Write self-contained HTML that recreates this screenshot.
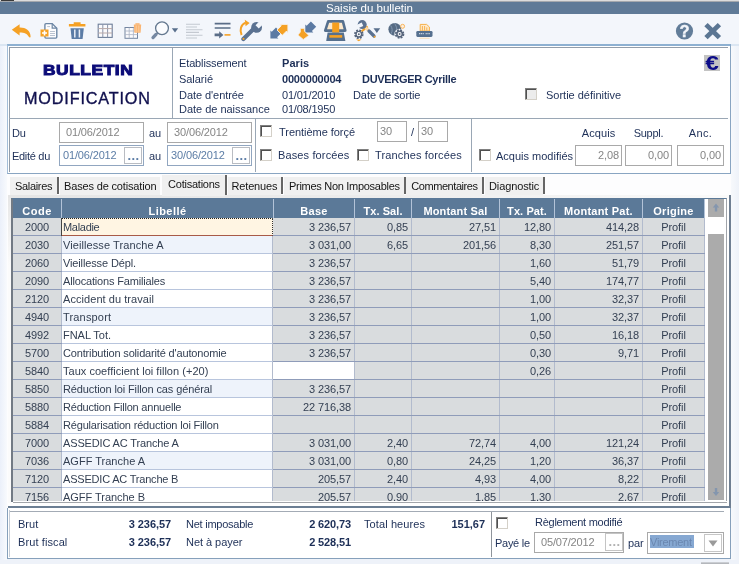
<!DOCTYPE html>
<html lang="fr"><head><meta charset="utf-8"><title>Saisie du bulletin</title>
<style>
*{box-sizing:border-box;margin:0;padding:0}
html,body{width:739px;height:564px;overflow:hidden}
body{position:relative;background:#eef2f9;font-family:"Liberation Sans",Arial,sans-serif;font-size:11px;color:#1d2f57;letter-spacing:-.1px}
.a{position:absolute;white-space:nowrap}
.t{position:absolute;white-space:nowrap;line-height:14px;height:14px}
.b{font-weight:bold}
#title{left:0;top:0;width:739px;height:14px;background:#5f7a97;border-top:1px solid #dcdcdc;box-shadow:inset 0 1px 0 #a4a8ad}
#title span{position:absolute;left:0;width:739px;text-align:center;top:0;line-height:15px;color:#fff;font-size:11.5px;letter-spacing:0}
#tb{left:0;top:14px;width:739px;height:30px;background:#f3f6fb}
#main{left:8px;top:46px;width:722px;height:127px;background:#fff;border:1px solid #7f9db9;border-top:2px solid #7f9db9}
.hl{position:absolute;height:1px;background:#9aa7b5}
.vl{position:absolute;width:1px;background:#9aa7b5}
.in{position:absolute;background:#fff;border:1px solid #a9a9a9;color:#858585;line-height:19px;height:21px;padding:0 0 0 6px;white-space:nowrap;font-size:11px}
.in.bl{border-color:#91a6c0;color:#5c7da6}
.in.r{text-align:right;padding:0 2px 0 0}
.dots{position:absolute;width:18px;height:17px;border:1px solid #b9bcc2;background:#fff;color:#5c7da6;font-weight:bold;text-align:center;line-height:15px;font-size:13px;letter-spacing:.4px;padding-left:1px}
.cb{position:absolute;width:12px;height:12px;background:#fff;border:1px solid #d4d0c8;border-top-color:#808080;border-left-color:#808080;box-shadow:inset 1px 1px 0 #505050}
.cb.dis{background:#ececec}
.tab{position:absolute;top:177px;height:18px;line-height:19px;background:#f0f0f0;white-space:nowrap;color:#141414;font-size:11px}
.tab.act{top:175px;height:21px;line-height:18px;z-index:2}
#grid{left:11px;top:198px;width:718px;height:306px;background:#fff;border:1px solid #8a8a8a;border-bottom:none;overflow:hidden}
.th{border-right:1px solid #b3c3d8;position:absolute;top:199px;height:19px;background:#5b7998;color:#fff;font-weight:bold;font-size:11px;text-align:center;line-height:24px;white-space:nowrap;overflow:hidden}
.td{border-right:1px solid #b2bbcd;position:absolute;height:17px;line-height:19px;background:#d9dcde;color:#333f52;white-space:nowrap;overflow:hidden;font-size:11px}
.td.c{text-align:center}
.td.l{background:#fff;padding-left:1px;height:18px;border-bottom:1px solid #b8c5dd}
.td.lb{background:#eef3fb}
.td.r{text-align:right;padding-right:3px}
.td.r2{padding-right:3px}
.td.w{background:#fff}
.td.sel{background:#fff5e3;border-bottom:1px solid #a85a48;border-right:1px dotted #333;border-top:1px dotted #222;box-shadow:-1px 0 0 #444;line-height:17px;z-index:3;}
#bot{left:7px;top:508px;width:724px;height:51px;background:#fff;border:1px solid #86a0bb;border-top:none}
#root{position:absolute;left:0;top:0;width:739px;height:564px;will-change:transform}
</style></head><body><div id="root">
<div id="title" class="a"><span>Saisie du bulletin</span></div>
<div class="a" style="left:1px;top:0;width:13px;height:1px;background:#3a3a3a"></div>
<div id="tb" class="a"></div>
<div class="a" style="left:0;top:46px;width:7px;height:514px;background:linear-gradient(90deg,#ebf0fa,#f8fafd)"></div>
<div class="a" style="left:731px;top:46px;width:8px;height:514px;background:linear-gradient(90deg,#f7f9fc,#eef2f9)"></div>

<svg class="a" style="left:0;top:15px" width="739" height="30" viewBox="0 15 739 30">
<g fill="none" stroke-linecap="butt">
<!-- 1 back arrow -->
<path d="M11.8 29.8 L19.6 24.3 V27.6 C25.5 27.4 30.3 30.5 30.6 36.2 C30.6 37.6 29.6 38 28.8 36.8 C27 33.6 24.5 32.4 19.6 32.4 V35.6 Z" fill="#f5a124"/>
<!-- 2 doc plus -->
<path d="M46 23.6 H52.2 L56.8 28.2 V37 Q56.8 38.1 55.7 38.1 H46 Q44.9 38.1 44.9 37 V24.7 Q44.9 23.6 46 23.6 Z" fill="#fdfdfe" stroke="#6d87a5" stroke-width="1.4"/>
<path d="M52.2 23.6 V28.2 H56.8" stroke="#6d87a5" stroke-width="1.2"/><path d="M47.2 26.6 H50" stroke="#b9c3d0" stroke-width="1"/>
<path d="M50 31.5 H55 M50 33.5 H55 M50 35.5 H55" stroke="#b9c3d0" stroke-width="1"/>
<rect x="40.5" y="29.5" width="8" height="7" fill="#f5a124"/>
<path d="M44.5 30.5 V35.5 M42 33 H47" stroke="#fff" stroke-width="1.6"/>
<!-- 3 trash -->
<path d="M68.9 26.5 H85.4 V24.1 H80.6 V22.2 H73.7 V24.1 H68.9 Z" fill="#f5a124"/>
<path d="M70.5 28.2 H83.8 L82.6 39 H71.7 Z" fill="#5b7ca6"/>
<path d="M74.8 29.6 V37.6 M79.4 29.6 V37.6" stroke="#e9eef6" stroke-width="1.5"/>
<!-- 4 grid -->
<rect x="98.2" y="24.2" width="14" height="13.2" fill="#fbfbfd" stroke="#6d7e99" stroke-width="1.1"/>
<path d="M102.8 24.2 V37.4 M107.6 24.2 V37.4" stroke="#8a94aa" stroke-width="1"/>
<path d="M98.2 28.6 H112.2 M98.2 33 H112.2" stroke="#b9a9a8" stroke-width="1"/>
<!-- 5 grid + trash -->
<rect x="125" y="27.5" width="12.5" height="10.8" fill="#fbfbfd" stroke="#7485a0" stroke-width="1"/>
<path d="M129.2 27.5 V38.3 M133.4 27.5 V38.3 M125 31 H137.5 M125 34.6 H137.5" stroke="#a9b3c4" stroke-width=".8"/>
<path d="M133.8 24.6 H141.2 L140.6 32.8 H134.4 Z" fill="#fab573"/><path d="M136.2 25.5 V32 M138.8 25.5 V32" stroke="#fcd0a4" stroke-width=".9"/>
<path d="M135.4 23.2 H139.6 V24.8 H135.4 Z" fill="#fab573"/>
<!-- 6 magnifier -->
<circle cx="162" cy="28.3" r="6.4" fill="#fbfcfe" stroke="#64788f" stroke-width="1.3"/>
<path d="M157.6 32.8 L155 35.4" stroke="#64788f" stroke-width="1.6"/><path d="M156 34.4 L153 37.6" stroke="#7588a2" stroke-width="3.3" stroke-linecap="round"/>
<path d="M171.8 28.3 H178.2 L175 32.6 Z" fill="#596f8c"/>
<!-- 7 lines disabled -->
<path d="M186 24.3 H200 M186 27 H197 M186 29.7 H202.5 M186 32.4 H199 M186 35.2 H202.5 M186 38 H197" stroke="#c4c9d1" stroke-width="1.1"/>
<!-- 8 lines arrow -->
<path d="M214.7 23.6 H230.5 M214.7 28 H230.5" stroke="#5a6d87" stroke-width="1.7"/>
<path d="M214.6 33.5 H219.2 V31.2 L223.4 34.9 L219.2 38.6 V36.3 H214.6 Z" fill="#5a6d87"/>
<path d="M224.5 34.9 H230.5" stroke="#f5a124" stroke-width="1.6"/>
<!-- 9 wrench + orange arrow -->
<path d="M243.4 39 L254.5 28" stroke="#5b7291" stroke-width="4.2" stroke-linecap="round"/>
<circle cx="256.6" cy="27.4" r="5.4" fill="#5b7291"/>
<rect x="255.2" y="16" width="4.6" height="11" fill="#f3f6fb" transform="rotate(45 257.5 26.5)"/>
<circle cx="243.5" cy="38.8" r="1.1" fill="#f5a124"/>
<path d="M241.6 35 C239.4 30 240.8 24.6 245.6 22.6" stroke="#f5a124" stroke-width="2"/>
<path d="M244.8 19.8 L249.6 23 L245.6 26.2 Z" fill="#f5a124"/>
<!-- 10 arrows out -->
<path d="M270.4 38.5 V30.5 L271.75 31.85 L276 27.6 L281.3 32.9 L277.05 37.15 L278.4 38.5 Z" fill="#5b7aa3"/>
<path d="M287.9 24.4 H279.9 L281.25 25.75 L277 30 L282.3 35.3 L286.55 31.05 L287.9 32.4 Z" fill="#f5a124" stroke="#f6f1e8" stroke-width=".9"/>
<!-- 11 arrows in -->
<path d="M305.3 32.4 V24.4 L306.65 25.75 L310.9 21.5 L316.2 26.8 L311.95 31.05 L313.3 32.4 Z" fill="#5b7aa3"/>
<path d="M300.4 28.4 H304.4 V31.2 L308.8 35.4 L303.3 39.4 L298 35 L300.4 32 Z" fill="#f5a124" stroke="#f6f1e8" stroke-width=".7"/>
<!-- 12 computer -->
<path d="M328.2 21.4 H342.9 L345.3 30.6 H325.2 Z" fill="#fde9cc" stroke="#56708e" stroke-width="2.6" stroke-linejoin="round"/>
<rect x="332.2" y="22.6" width="7" height="10.2" fill="#f59f1e"/>
<path d="M327.6 32.4 H343.8 L345.4 41 H326.2 Z" fill="#56708e"/>
<path d="M329.4 36.4 H342.2" stroke="#f5a124" stroke-width="2.6"/>
<!-- 13 tools + gear + dropdown -->
<path d="M361 32 L367.6 26.4" stroke="#f5a124" stroke-width="2.2"/>
<path d="M365.6 27.6 L369.2 31.2" stroke="#fad9a8" stroke-width="3" />
<path d="M369 31 L374 36" stroke="#5b7291" stroke-width="3.2" stroke-linecap="round"/>
<circle cx="374.6" cy="36.8" r="1" fill="#f5a124"/>
<circle cx="362.2" cy="24.6" r="4.5" fill="#5b7291"/>
<rect x="354" y="22.6" width="8.6" height="3.6" fill="#f3f6fb" transform="rotate(-25 362.2 24.6)"/>
<circle cx="358.8" cy="34.2" r="3.7" fill="#fff" stroke="#56657c" stroke-width="2.2" stroke-dasharray="1.75 1.15"/>
<circle cx="358.8" cy="34.2" r="2.8" fill="#fff" stroke="#56657c" stroke-width="1.4"/>
<circle cx="358.8" cy="34.2" r="1" fill="#56657c"/>
<path d="M356 39.4 H361.6 L358.8 41.2 Z" fill="#f5a124"/>
<path d="M373.5 28.3 H380.2 L376.85 33 Z" fill="#596f8c"/>
<!-- 14 globe gear -->
<circle cx="394.8" cy="29.3" r="6.4" fill="#566b84"/>
<path d="M390.6 25.4 C392.6 28.4 392.6 31 391 33.8 M394.4 23.2 C397.4 27.2 397.4 31.4 395 35.2" stroke="#8297b0" stroke-width="1"/>
<circle cx="402.6" cy="26.3" r="2" fill="#fdeedd" stroke="#f7b45a" stroke-width="1"/>
<circle cx="399.6" cy="34" r="5.3" fill="#f3f6fb"/>
<circle cx="399.6" cy="34" r="3.6" fill="none" stroke="#56657c" stroke-width="2.3" stroke-dasharray="1.75 1.08"/>
<circle cx="399.6" cy="34" r="2.7" fill="#fff" stroke="#56657c" stroke-width="1.5"/>
<circle cx="399.6" cy="34" r="1" fill="#56657c"/>
<!-- 15 printer -->
<path d="M420.2 24.4 H426.6 L429.4 27 V31 H420.2 Z" fill="#fde9cb" stroke="#f7b048" stroke-width="1"/>
<path d="M422.4 26 V30.6 M424.6 26 V30.6 M426.8 27.4 V30.6" stroke="#f7ab3c" stroke-width=".9"/>
<rect x="416.3" y="31" width="16.2" height="5.9" rx="1.3" fill="#55708f"/>
<path d="M419 33.6 H424 M425.6 33.6 H430" stroke="#c9d3df" stroke-width="1.1" stroke-dasharray="1.2 .6"/>
<path d="M419.6 38.2 H429.6" stroke="#fadcae" stroke-width="1"/>
<!-- help -->
<circle cx="684.5" cy="31" r="8.6" fill="#627d99"/>
<!-- close -->
<path d="M706 24.6 L719.4 37.6 M719.4 24.6 L706 37.6" stroke="#5b7693" stroke-width="4.8"/>
</g>
<text x="684.6" y="36.9" text-anchor="middle" font-family="Liberation Sans, Arial, sans-serif" font-weight="bold" font-size="16.5" fill="#f3f6fb" stroke="#f3f6fb" stroke-width=".4">?</text>
</svg>

<div class="a" style="left:0;top:44px;width:739px;height:2px;background:#dbe6f2"></div>
<div class="a" style="left:7px;top:44px;width:724px;height:130px;background:#fff;border:1px solid #89a5c2;border-top:2px solid #8db0d1;border-left-color:#a3bdd8"></div>
<div class="hl" style="left:9px;top:47px;width:719px;background:#939da9"></div>
<div class="vl" style="left:9px;top:47px;height:125px;background:#939da9"></div>
<div class="vl" style="left:172px;top:48px;height:70px"></div>
<div class="hl" style="left:9px;top:118px;width:719px"></div>
<div class="vl" style="left:255px;top:118px;height:54px"></div>
<div class="vl" style="left:471px;top:118px;height:54px"></div>
<div class="a b" style="left:42.5px;top:58px;font-size:14.8px;line-height:24px;color:#0c0c78;letter-spacing:.5px;transform:scaleX(1.17);transform-origin:0 0;-webkit-text-stroke:1px #0c0c78">BULLETIN</div>
<div class="a" style="left:24px;top:85.5px;font-size:16.2px;line-height:24px;color:#10104e;letter-spacing:.85px;-webkit-text-stroke:.35px #10104e">MODIFICATION</div>
<div class="t" style="left:179px;top:56px"><span style="letter-spacing:-0.13px">Etablissement</span></div>
<div class="t" style="left:179px;top:72px"><span style="letter-spacing:-0.04px">Salarié</span></div>
<div class="t" style="left:179px;top:88px"><span style="letter-spacing:-0.06px">Date d'entrée</span></div>
<div class="t" style="left:179px;top:102px"><span style="letter-spacing:-0.02px">Date de naissance</span></div>
<div class="t b" style="left:282px;top:56px"><span style="letter-spacing:0.08px">Paris</span></div>
<div class="t b" style="left:282px;top:72px"><span style="letter-spacing:-0.19px">0000000004</span></div>
<div class="t" style="left:282px;top:88px"><span style="letter-spacing:-0.20px">01/01/2010</span></div>
<div class="t" style="left:282px;top:102px"><span style="letter-spacing:-0.20px">01/08/1950</span></div>
<div class="t b" style="left:362px;top:72px"><span style="letter-spacing:-0.30px">DUVERGER Cyrille</span></div>
<div class="t" style="left:353px;top:88px"><span style="letter-spacing:-0.08px">Date de sortie</span></div>
<div class="cb dis" style="left:525px;top:88px"></div>
<div class="t" style="left:546px;top:88px"><span style="letter-spacing:-0.01px">Sortie définitive</span></div>
<div class="a" style="left:704px;top:55px;width:16px;height:16px;background:#c3c3c3;overflow:hidden"><div style="color:#0c0c88;font-weight:bold;font-size:19.5px;line-height:17px;width:16px;text-align:center;transform:scaleX(1.25);letter-spacing:0">€</div></div>

<div class="t" style="left:12px;top:126px">Du</div>
<div class="in" style="left:59px;top:122px;width:85px"><span style="letter-spacing:-0.15px">01/06/2012</span></div>
<div class="t" style="left:149px;top:126px">au</div>
<div class="in" style="left:167px;top:122px;width:85px"><span style="letter-spacing:-0.12px">30/06/2012</span></div>
<div class="t" style="left:12px;top:149px"><span style="letter-spacing:-0.30px">Edité du</span></div>
<div class="in bl" style="left:59px;top:145px;width:85px;padding-left:3px"><span style="letter-spacing:-0.15px">01/06/2012</span></div>
<div class="dots" style="left:124px;top:147px">...</div>
<div class="t" style="left:149px;top:149px">au</div>
<div class="in bl" style="left:167px;top:145px;width:85px;padding-left:3px"><span style="letter-spacing:-0.12px">30/06/2012</span></div>
<div class="dots" style="left:232px;top:147px">...</div>
<div class="cb" style="left:260px;top:125px"></div>
<div class="t" style="left:279px;top:125px"><span style="letter-spacing:-0.04px">Trentième forçé</span></div>
<div class="cb" style="left:260px;top:149px"></div>
<div class="t" style="left:278px;top:148px"><span style="letter-spacing:0.13px">Bases forcées</span></div>
<div class="cb" style="left:357px;top:149px"></div>
<div class="t" style="left:375px;top:148px"><span style="letter-spacing:0.14px">Tranches forcées</span></div>
<div class="in" style="left:377px;top:121px;width:30px;padding-left:2px">30</div>
<div class="t" style="left:411px;top:125px">/</div>
<div class="in" style="left:418px;top:121px;width:30px;padding-left:2px">30</div>
<div class="cb" style="left:479px;top:149px"></div>
<div class="t" style="left:496px;top:149px"><span style="letter-spacing:-0.00px">Acquis modifiés</span></div>
<div class="t" style="left:575px;width:47px;text-align:center;top:126px"><span style="letter-spacing:0.09px">Acquis</span></div>
<div class="t" style="left:625px;width:47px;text-align:center;top:126px"><span style="letter-spacing:-0.24px">Suppl.</span></div>
<div class="t" style="left:677px;width:47px;text-align:center;top:126px"><span style="letter-spacing:0.33px">Anc.</span></div>
<div class="in r" style="left:575px;top:145px;width:47px">2,08</div>
<div class="in r" style="left:625px;top:145px;width:47px">0,00</div>
<div class="in r" style="left:677px;top:145px;width:47px">0,00</div>

<div class="a" style="left:7px;top:174px;width:724px;height:334px;background:#fdfdfe"></div>
<div class="tab" style="left:10px;width:46.50px;padding-left:5.00px"><span style="letter-spacing:-0.32px">Salaires</span></div>
<div class="a" style="left:56.5px;top:177.3px;width:2px;height:16.5px;background:#666"></div>
<div class="tab" style="left:59.5px;width:100.00px;padding-left:4.50px"><span style="letter-spacing:-0.16px">Bases de cotisation</span></div>
<div class="tab act" style="left:161.5px;width:63.70px;padding-left:6.60px"><span style="letter-spacing:-0.24px">Cotisations</span></div>
<div class="a" style="left:225.2px;top:175px;width:2px;height:19.5px;background:#666"></div>
<div class="tab" style="left:228px;width:53.25px;padding-left:3.50px"><span style="letter-spacing:-0.16px">Retenues</span></div>
<div class="a" style="left:281.25px;top:177.3px;width:2px;height:16.5px;background:#666"></div>
<div class="tab" style="left:284px;width:119.75px;padding-left:5.00px"><span style="letter-spacing:-0.29px">Primes Non Imposables</span></div>
<div class="a" style="left:403.75px;top:177.3px;width:2px;height:16.5px;background:#666"></div>
<div class="tab" style="left:406px;width:76.00px;padding-left:5.25px"><span style="letter-spacing:-0.43px">Commentaires</span></div>
<div class="a" style="left:482px;top:177.3px;width:2px;height:16.5px;background:#666"></div>
<div class="tab" style="left:484.5px;width:58.75px;padding-left:4.50px"><span style="letter-spacing:-0.12px">Diagnostic</span></div>
<div class="a" style="left:543.25px;top:177.3px;width:2px;height:16.5px;background:#666"></div>
<div class="a" style="left:8px;top:195px;width:723px;height:313px;background:#fff;border-right:2px solid #6f7f92;border-bottom:2px solid #6c7f94"></div>
<div class="a" style="left:8px;top:195px;width:3px;height:308px;background:linear-gradient(#e6e6e6,#fbfbfb 70px)"></div>
<div class="a" style="left:8px;top:195px;width:721px;height:3px;background:linear-gradient(90deg,#e5e5e5,#ececec 50%,#fafafa)"></div>
<div class="a" style="left:11px;top:198px;width:716px;height:304px;background:#fff;border-left:2px solid #727a84;border-top:1px solid #5b7998;border-right:1px solid #a0a4aa;border-bottom:none"></div>
<div class="a" style="left:13px;top:200px;width:692px;height:301px;background:#8f9cb9"></div>
<div class="th" style="left:13px;width:49px"><span style="letter-spacing:0.50px">Code</span></div>
<div class="th" style="left:62px;width:212px"><span style="letter-spacing:0.44px">Libellé</span></div>
<div class="th" style="left:274px;width:81px"><span style="letter-spacing:0.32px">Base</span></div>
<div class="th" style="left:355px;width:57px"><span style="letter-spacing:0.07px">Tx. Sal.</span></div>
<div class="th" style="left:412px;width:88px"><span style="letter-spacing:0.17px">Montant Sal</span></div>
<div class="th" style="left:500px;width:55px"><span style="letter-spacing:0.09px">Tx. Pat.</span></div>
<div class="th" style="left:555px;width:88px"><span style="letter-spacing:0.23px">Montant Pat.</span></div>
<div class="th" style="left:643px;width:62px"><span style="letter-spacing:0.29px">Origine</span></div>
<div class="td c" style="left:13px;top:218px;width:49px">2000</div>
<div class="td l sel" style="left:62px;top:218px;width:211px"><span style="letter-spacing:-0.30px">Maladie</span></div>
<div class="td r" style="left:273px;top:218px;width:82px">3 236,57</div>
<div class="td r r2" style="left:355px;top:218px;width:57px">0,85</div>
<div class="td r r2" style="left:412px;top:218px;width:88px">27,51</div>
<div class="td r r2" style="left:500px;top:218px;width:55px">12,80</div>
<div class="td r r2" style="left:555px;top:218px;width:88px">414,28</div>
<div class="td c" style="left:643px;top:218px;width:62px">Profil</div>
<div class="td c" style="left:13px;top:236px;width:49px">2030</div>
<div class="td l lb" style="left:62px;top:236px;width:211px"><span style="letter-spacing:0.09px">Vieillesse Tranche A</span></div>
<div class="td r" style="left:273px;top:236px;width:82px">3 031,00</div>
<div class="td r r2" style="left:355px;top:236px;width:57px">6,65</div>
<div class="td r r2" style="left:412px;top:236px;width:88px">201,56</div>
<div class="td r r2" style="left:500px;top:236px;width:55px">8,30</div>
<div class="td r r2" style="left:555px;top:236px;width:88px">251,57</div>
<div class="td c" style="left:643px;top:236px;width:62px">Profil</div>
<div class="td c" style="left:13px;top:254px;width:49px">2060</div>
<div class="td l" style="left:62px;top:254px;width:211px"><span style="letter-spacing:-0.13px">Vieillesse Dépl.</span></div>
<div class="td r" style="left:273px;top:254px;width:82px">3 236,57</div>
<div class="td r r2" style="left:355px;top:254px;width:57px"></div>
<div class="td r r2" style="left:412px;top:254px;width:88px"></div>
<div class="td r r2" style="left:500px;top:254px;width:55px">1,60</div>
<div class="td r r2" style="left:555px;top:254px;width:88px">51,79</div>
<div class="td c" style="left:643px;top:254px;width:62px">Profil</div>
<div class="td c" style="left:13px;top:272px;width:49px">2090</div>
<div class="td l" style="left:62px;top:272px;width:211px"><span style="letter-spacing:-0.17px">Allocations Familiales</span></div>
<div class="td r" style="left:273px;top:272px;width:82px">3 236,57</div>
<div class="td r r2" style="left:355px;top:272px;width:57px"></div>
<div class="td r r2" style="left:412px;top:272px;width:88px"></div>
<div class="td r r2" style="left:500px;top:272px;width:55px">5,40</div>
<div class="td r r2" style="left:555px;top:272px;width:88px">174,77</div>
<div class="td c" style="left:643px;top:272px;width:62px">Profil</div>
<div class="td c" style="left:13px;top:290px;width:49px">2120</div>
<div class="td l" style="left:62px;top:290px;width:211px"><span style="letter-spacing:0.06px">Accident du travail</span></div>
<div class="td r" style="left:273px;top:290px;width:82px">3 236,57</div>
<div class="td r r2" style="left:355px;top:290px;width:57px"></div>
<div class="td r r2" style="left:412px;top:290px;width:88px"></div>
<div class="td r r2" style="left:500px;top:290px;width:55px">1,00</div>
<div class="td r r2" style="left:555px;top:290px;width:88px">32,37</div>
<div class="td c" style="left:643px;top:290px;width:62px">Profil</div>
<div class="td c" style="left:13px;top:308px;width:49px">4940</div>
<div class="td l lb" style="left:62px;top:308px;width:211px"><span style="letter-spacing:0.17px">Transport</span></div>
<div class="td r" style="left:273px;top:308px;width:82px">3 236,57</div>
<div class="td r r2" style="left:355px;top:308px;width:57px"></div>
<div class="td r r2" style="left:412px;top:308px;width:88px"></div>
<div class="td r r2" style="left:500px;top:308px;width:55px">1,00</div>
<div class="td r r2" style="left:555px;top:308px;width:88px">32,37</div>
<div class="td c" style="left:643px;top:308px;width:62px">Profil</div>
<div class="td c" style="left:13px;top:326px;width:49px">4992</div>
<div class="td l" style="left:62px;top:326px;width:211px"><span style="letter-spacing:-0.04px">FNAL Tot.</span></div>
<div class="td r" style="left:273px;top:326px;width:82px">3 236,57</div>
<div class="td r r2" style="left:355px;top:326px;width:57px"></div>
<div class="td r r2" style="left:412px;top:326px;width:88px"></div>
<div class="td r r2" style="left:500px;top:326px;width:55px">0,50</div>
<div class="td r r2" style="left:555px;top:326px;width:88px">16,18</div>
<div class="td c" style="left:643px;top:326px;width:62px">Profil</div>
<div class="td c" style="left:13px;top:344px;width:49px">5700</div>
<div class="td l" style="left:62px;top:344px;width:211px"><span style="letter-spacing:-0.16px">Contribution solidarité d'autonomie</span></div>
<div class="td r" style="left:273px;top:344px;width:82px">3 236,57</div>
<div class="td r r2" style="left:355px;top:344px;width:57px"></div>
<div class="td r r2" style="left:412px;top:344px;width:88px"></div>
<div class="td r r2" style="left:500px;top:344px;width:55px">0,30</div>
<div class="td r r2" style="left:555px;top:344px;width:88px">9,71</div>
<div class="td c" style="left:643px;top:344px;width:62px">Profil</div>
<div class="td c" style="left:13px;top:362px;width:49px">5840</div>
<div class="td l" style="left:62px;top:362px;width:211px"><span style="letter-spacing:0.03px">Taux coefficient loi fillon (+20)</span></div>
<div class="td r w" style="left:273px;top:362px;width:82px"></div>
<div class="td r r2" style="left:355px;top:362px;width:57px"></div>
<div class="td r r2" style="left:412px;top:362px;width:88px"></div>
<div class="td r r2" style="left:500px;top:362px;width:55px">0,26</div>
<div class="td r r2" style="left:555px;top:362px;width:88px"></div>
<div class="td c" style="left:643px;top:362px;width:62px">Profil</div>
<div class="td c" style="left:13px;top:380px;width:49px">5850</div>
<div class="td l lb" style="left:62px;top:380px;width:211px"><span style="letter-spacing:-0.12px">Réduction loi Fillon cas général</span></div>
<div class="td r" style="left:273px;top:380px;width:82px">3 236,57</div>
<div class="td r r2" style="left:355px;top:380px;width:57px"></div>
<div class="td r r2" style="left:412px;top:380px;width:88px"></div>
<div class="td r r2" style="left:500px;top:380px;width:55px"></div>
<div class="td r r2" style="left:555px;top:380px;width:88px"></div>
<div class="td c" style="left:643px;top:380px;width:62px">Profil</div>
<div class="td c" style="left:13px;top:398px;width:49px">5880</div>
<div class="td l" style="left:62px;top:398px;width:211px"><span style="letter-spacing:-0.21px">Réduction Fillon annuelle</span></div>
<div class="td r" style="left:273px;top:398px;width:82px">22 716,38</div>
<div class="td r r2" style="left:355px;top:398px;width:57px"></div>
<div class="td r r2" style="left:412px;top:398px;width:88px"></div>
<div class="td r r2" style="left:500px;top:398px;width:55px"></div>
<div class="td r r2" style="left:555px;top:398px;width:88px"></div>
<div class="td c" style="left:643px;top:398px;width:62px">Profil</div>
<div class="td c" style="left:13px;top:416px;width:49px">5884</div>
<div class="td l" style="left:62px;top:416px;width:211px"><span style="letter-spacing:-0.18px">Régularisation réduction loi Fillon</span></div>
<div class="td r" style="left:273px;top:416px;width:82px"></div>
<div class="td r r2" style="left:355px;top:416px;width:57px"></div>
<div class="td r r2" style="left:412px;top:416px;width:88px"></div>
<div class="td r r2" style="left:500px;top:416px;width:55px"></div>
<div class="td r r2" style="left:555px;top:416px;width:88px"></div>
<div class="td c" style="left:643px;top:416px;width:62px">Profil</div>
<div class="td c" style="left:13px;top:434px;width:49px">7000</div>
<div class="td l" style="left:62px;top:434px;width:211px"><span style="letter-spacing:-0.14px">ASSEDIC AC Tranche A</span></div>
<div class="td r" style="left:273px;top:434px;width:82px">3 031,00</div>
<div class="td r r2" style="left:355px;top:434px;width:57px">2,40</div>
<div class="td r r2" style="left:412px;top:434px;width:88px">72,74</div>
<div class="td r r2" style="left:500px;top:434px;width:55px">4,00</div>
<div class="td r r2" style="left:555px;top:434px;width:88px">121,24</div>
<div class="td c" style="left:643px;top:434px;width:62px">Profil</div>
<div class="td c" style="left:13px;top:452px;width:49px">7036</div>
<div class="td l lb" style="left:62px;top:452px;width:211px"><span style="letter-spacing:0.01px">AGFF Tranche A</span></div>
<div class="td r" style="left:273px;top:452px;width:82px">3 031,00</div>
<div class="td r r2" style="left:355px;top:452px;width:57px">0,80</div>
<div class="td r r2" style="left:412px;top:452px;width:88px">24,25</div>
<div class="td r r2" style="left:500px;top:452px;width:55px">1,20</div>
<div class="td r r2" style="left:555px;top:452px;width:88px">36,37</div>
<div class="td c" style="left:643px;top:452px;width:62px">Profil</div>
<div class="td c" style="left:13px;top:470px;width:49px">7120</div>
<div class="td l" style="left:62px;top:470px;width:211px"><span style="letter-spacing:-0.20px">ASSEDIC AC Tranche B</span></div>
<div class="td r" style="left:273px;top:470px;width:82px">205,57</div>
<div class="td r r2" style="left:355px;top:470px;width:57px">2,40</div>
<div class="td r r2" style="left:412px;top:470px;width:88px">4,93</div>
<div class="td r r2" style="left:500px;top:470px;width:55px">4,00</div>
<div class="td r r2" style="left:555px;top:470px;width:88px">8,22</div>
<div class="td c" style="left:643px;top:470px;width:62px">Profil</div>
<div class="td c" style="left:13px;top:488px;width:49px">7156</div>
<div class="td l" style="left:62px;top:488px;width:211px"><span style="letter-spacing:-0.04px">AGFF Tranche B</span></div>
<div class="td r" style="left:273px;top:488px;width:82px">205,57</div>
<div class="td r r2" style="left:355px;top:488px;width:57px">0,90</div>
<div class="td r r2" style="left:412px;top:488px;width:88px">1,85</div>
<div class="td r r2" style="left:500px;top:488px;width:55px">1,30</div>
<div class="td r r2" style="left:555px;top:488px;width:88px">2,67</div>
<div class="td c" style="left:643px;top:488px;width:62px">Profil</div>
<div class="a" style="left:13px;top:501px;width:714px;height:5px;background:#fff;border-top:1px solid #fff;z-index:4"><div style="height:1px;background:#a2a5aa"></div></div>
<div class="a" style="left:708px;top:199px;width:16px;height:301px;background:#ababab"></div>
<div class="a" style="left:708px;top:217px;width:16px;height:17px;background:#fff"></div>
<svg class="a" style="left:708px;top:200px" width="16" height="17" viewBox="0 0 16 17"><path d="M8 3.5 L11.2 7.5 H9.2 V11.5 H6.8 V7.5 H4.8 Z" fill="#8496ae"/></svg>
<svg class="a" style="left:708px;top:483px" width="16" height="17" viewBox="0 0 16 17"><path d="M8 13 L11.2 9 H9.2 V5 H6.8 V9 H4.8 Z" fill="#8496ae"/></svg>
<div id="bot" class="a"></div>
<div class="hl" style="left:9px;top:511px;width:715px;background:#a3abb5"></div>
<div class="vl" style="left:9px;top:510px;height:47px;background:#c5ccd5"></div>
<div class="t" style="left:18px;top:517px"><span style="letter-spacing:0.02px">Brut</span></div>
<div class="t" style="left:18px;top:535px"><span style="letter-spacing:0.10px">Brut fiscal</span></div>
<div class="t b" style="left:100px;width:71px;text-align:right;top:517px"><span style="letter-spacing:-0.08px">3 236,57</span></div>
<div class="t b" style="left:100px;width:71px;text-align:right;top:535px"><span style="letter-spacing:-0.08px">3 236,57</span></div>
<div class="t" style="left:186px;top:517px"><span style="letter-spacing:-0.24px">Net imposable</span></div>
<div class="t" style="left:186px;top:535px"><span style="letter-spacing:-0.04px">Net à payer</span></div>
<div class="t b" style="left:280px;width:71px;text-align:right;top:517px"><span style="letter-spacing:-0.12px">2 620,73</span></div>
<div class="t b" style="left:280px;width:71px;text-align:right;top:535px"><span style="letter-spacing:-0.12px">2 528,51</span></div>
<div class="t" style="left:364px;top:517px"><span style="letter-spacing:0.10px">Total heures</span></div>
<div class="t b" style="left:420px;width:65px;text-align:right;top:517px"><span style="letter-spacing:-0.03px">151,67</span></div>
<div class="vl" style="left:491px;top:512px;height:45px;background:#8e949b"></div>
<div class="cb" style="left:496px;top:517px"></div>
<div class="t" style="left:535px;top:515px"><span style="letter-spacing:-0.26px">Règlement modifié</span></div>
<div class="t" style="left:495px;top:536px"><span style="letter-spacing:-0.28px">Payé le</span></div>
<div class="in" style="left:534px;top:532px;width:90px;padding-left:6px"><span style="letter-spacing:-0.17px">05/07/2012</span></div>
<div class="dots" style="left:605px;top:533px;height:18px;color:#b2b2b2;line-height:16px;border-color:#c4c4c4">...</div>
<div class="t" style="left:628px;top:536px"><span style="letter-spacing:-0.08px">par</span></div>
<div class="in" style="left:647px;top:532px;width:77px;height:22px;padding:0"></div>
<div class="a" style="left:650px;top:535px;width:44px;height:13px;background:#86a8d2;color:#6a87b0;line-height:14px;font-size:11px"><span style="letter-spacing:-0.26px">Virement</span></div>
<div class="a" style="left:704px;top:534px;width:18px;height:18px;border:1px solid #c6c6c6;background:#fff"></div>
<svg class="a" style="left:704px;top:534px" width="18" height="18" viewBox="0 0 18 18"><path d="M4.5 6.5 H13.5 L9 12.5 Z" fill="#9a9a9a"/></svg>
<div class="a" style="left:701px;top:562px;width:28px;height:2px;background:linear-gradient(#d5d8dd,#a9acb1)"></div>
</div></body></html>
